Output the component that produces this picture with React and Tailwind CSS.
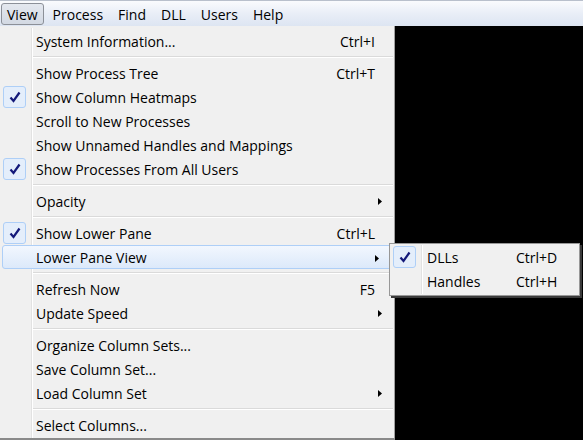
import React from "react";

const font = { fontFamily: '"Open Sans", "Noto Sans", sans-serif' };

function Check() {
  return (
    <div className="absolute left-[3px] top-[1px] w-[23px] h-[22px] rounded-[3px] border border-[#aecff7] bg-[#e4eefb] flex items-center justify-center">
      <svg width="12" height="12" viewBox="0 0 12 12">
        <path d="M1.5 6.5 L4.5 10 L10.5 1.5" fill="none" stroke="#14197a" strokeWidth="2.2" />
      </svg>
    </div>
  );
}

function Arrow() {
  return (
    <svg width="4" height="7" viewBox="0 0 4 7" className="absolute right-[12px] top-[9px]">
      <path d="M0 0 L4 3.5 L0 7 Z" fill="#000" />
    </svg>
  );
}

function Item({ label, shortcut, checked, sub, hover }) {
  return (
    <div
      className={
        "relative h-[24px] flex items-center text-[14px] text-black " +
        (hover
          ? "mx-[2px] rounded-[3px] border border-[#aecff7] bg-gradient-to-b from-[#f2f7fe] to-[#dce9fa]"
          : "")
      }
    >
      {checked && <Check />}
      <span className={hover ? "pl-[33px]" : "pl-[36px]"}>{label}</span>
      {shortcut && (
        <span className={"absolute top-[2px] " + (hover ? "right-[17px]" : "right-[19px]")}>{shortcut}</span>
      )}
      {sub && <Arrow />}
    </div>
  );
}

function Sep() {
  return (
    <div className="h-[8px] flex flex-col justify-center pl-[32px] pr-[1px]">
      <div className="h-px bg-[#dadada]" />
      <div className="h-px bg-white" />
    </div>
  );
}

export default function App() {
  const bar = ["Process", "Find", "DLL", "Users", "Help"];
  return (
    <div className="w-[583px] h-[440px] overflow-hidden flex flex-col bg-black" style={font}>
      <div className="h-[26px] flex items-end border-t border-[#b9c0cc] bg-gradient-to-b from-[#fafbfd] via-[#e9eef7] to-[#dde5f2] text-[14px] text-black">
        <div className="ml-[1px] mb-[1px] h-[22px] px-[5px] flex items-center rounded-[3px] border border-[#8c9098] bg-gradient-to-b from-[#e4e8ef] to-[#d3d9e3]">
          View
        </div>
        <div className="flex gap-[15px] ml-[9px] mb-[1px] h-[22px] items-center">
          {bar.map((b) => (
            <span key={b}>{b}</span>
          ))}
        </div>
      </div>
      <div className="flex-1 flex relative">
        <div className="relative w-[395px] bg-[#f0f0f0] border-r border-b-2 border-r-[#a0a0a0] border-b-[#8a8a8a] pt-[3px]">
          <div className="absolute left-[31px] top-[2px] bottom-0 w-[2px] border-l border-[#e2e2e2] bg-white" />
          <Item label="System Information..." shortcut="Ctrl+I" />
          <Sep />
          <Item label="Show Process Tree" shortcut="Ctrl+T" />
          <Item label="Show Column Heatmaps" checked />
          <Item label="Scroll to New Processes" />
          <Item label="Show Unnamed Handles and Mappings" />
          <Item label="Show Processes From All Users" checked />
          <Sep />
          <Item label="Opacity" sub />
          <Sep />
          <Item label="Show Lower Pane" shortcut="Ctrl+L" checked />
          <Item label="Lower Pane View" sub hover />
          <Sep />
          <Item label="Refresh Now" shortcut="F5" />
          <Item label="Update Speed" sub />
          <Sep />
          <Item label="Organize Column Sets..." />
          <Item label="Save Column Set..." />
          <Item label="Load Column Set" sub />
          <Sep />
          <Item label="Select Columns..." />
        </div>

        <div className="absolute left-[389px] top-[217px] w-[191px] h-[53px] bg-[#f0f0f0] border border-[#979797] pt-[1px] shadow-[2px_2px_0_#3a3a3a]">
          <div className="absolute left-[31px] top-[1px] bottom-[1px] w-[2px] border-l border-[#e2e2e2] bg-white" />
          <div className="relative h-[24px] flex items-center text-[14px]">
            <Check />
            <span className="pl-[37px]">DLLs</span>
            <span className="absolute left-[126px] top-[2px]">Ctrl+D</span>
          </div>
          <div className="relative h-[24px] flex items-center text-[14px]">
            <span className="pl-[37px]">Handles</span>
            <span className="absolute left-[126px] top-[2px]">Ctrl+H</span>
          </div>
        </div>
      </div>
    </div>
  );
}
